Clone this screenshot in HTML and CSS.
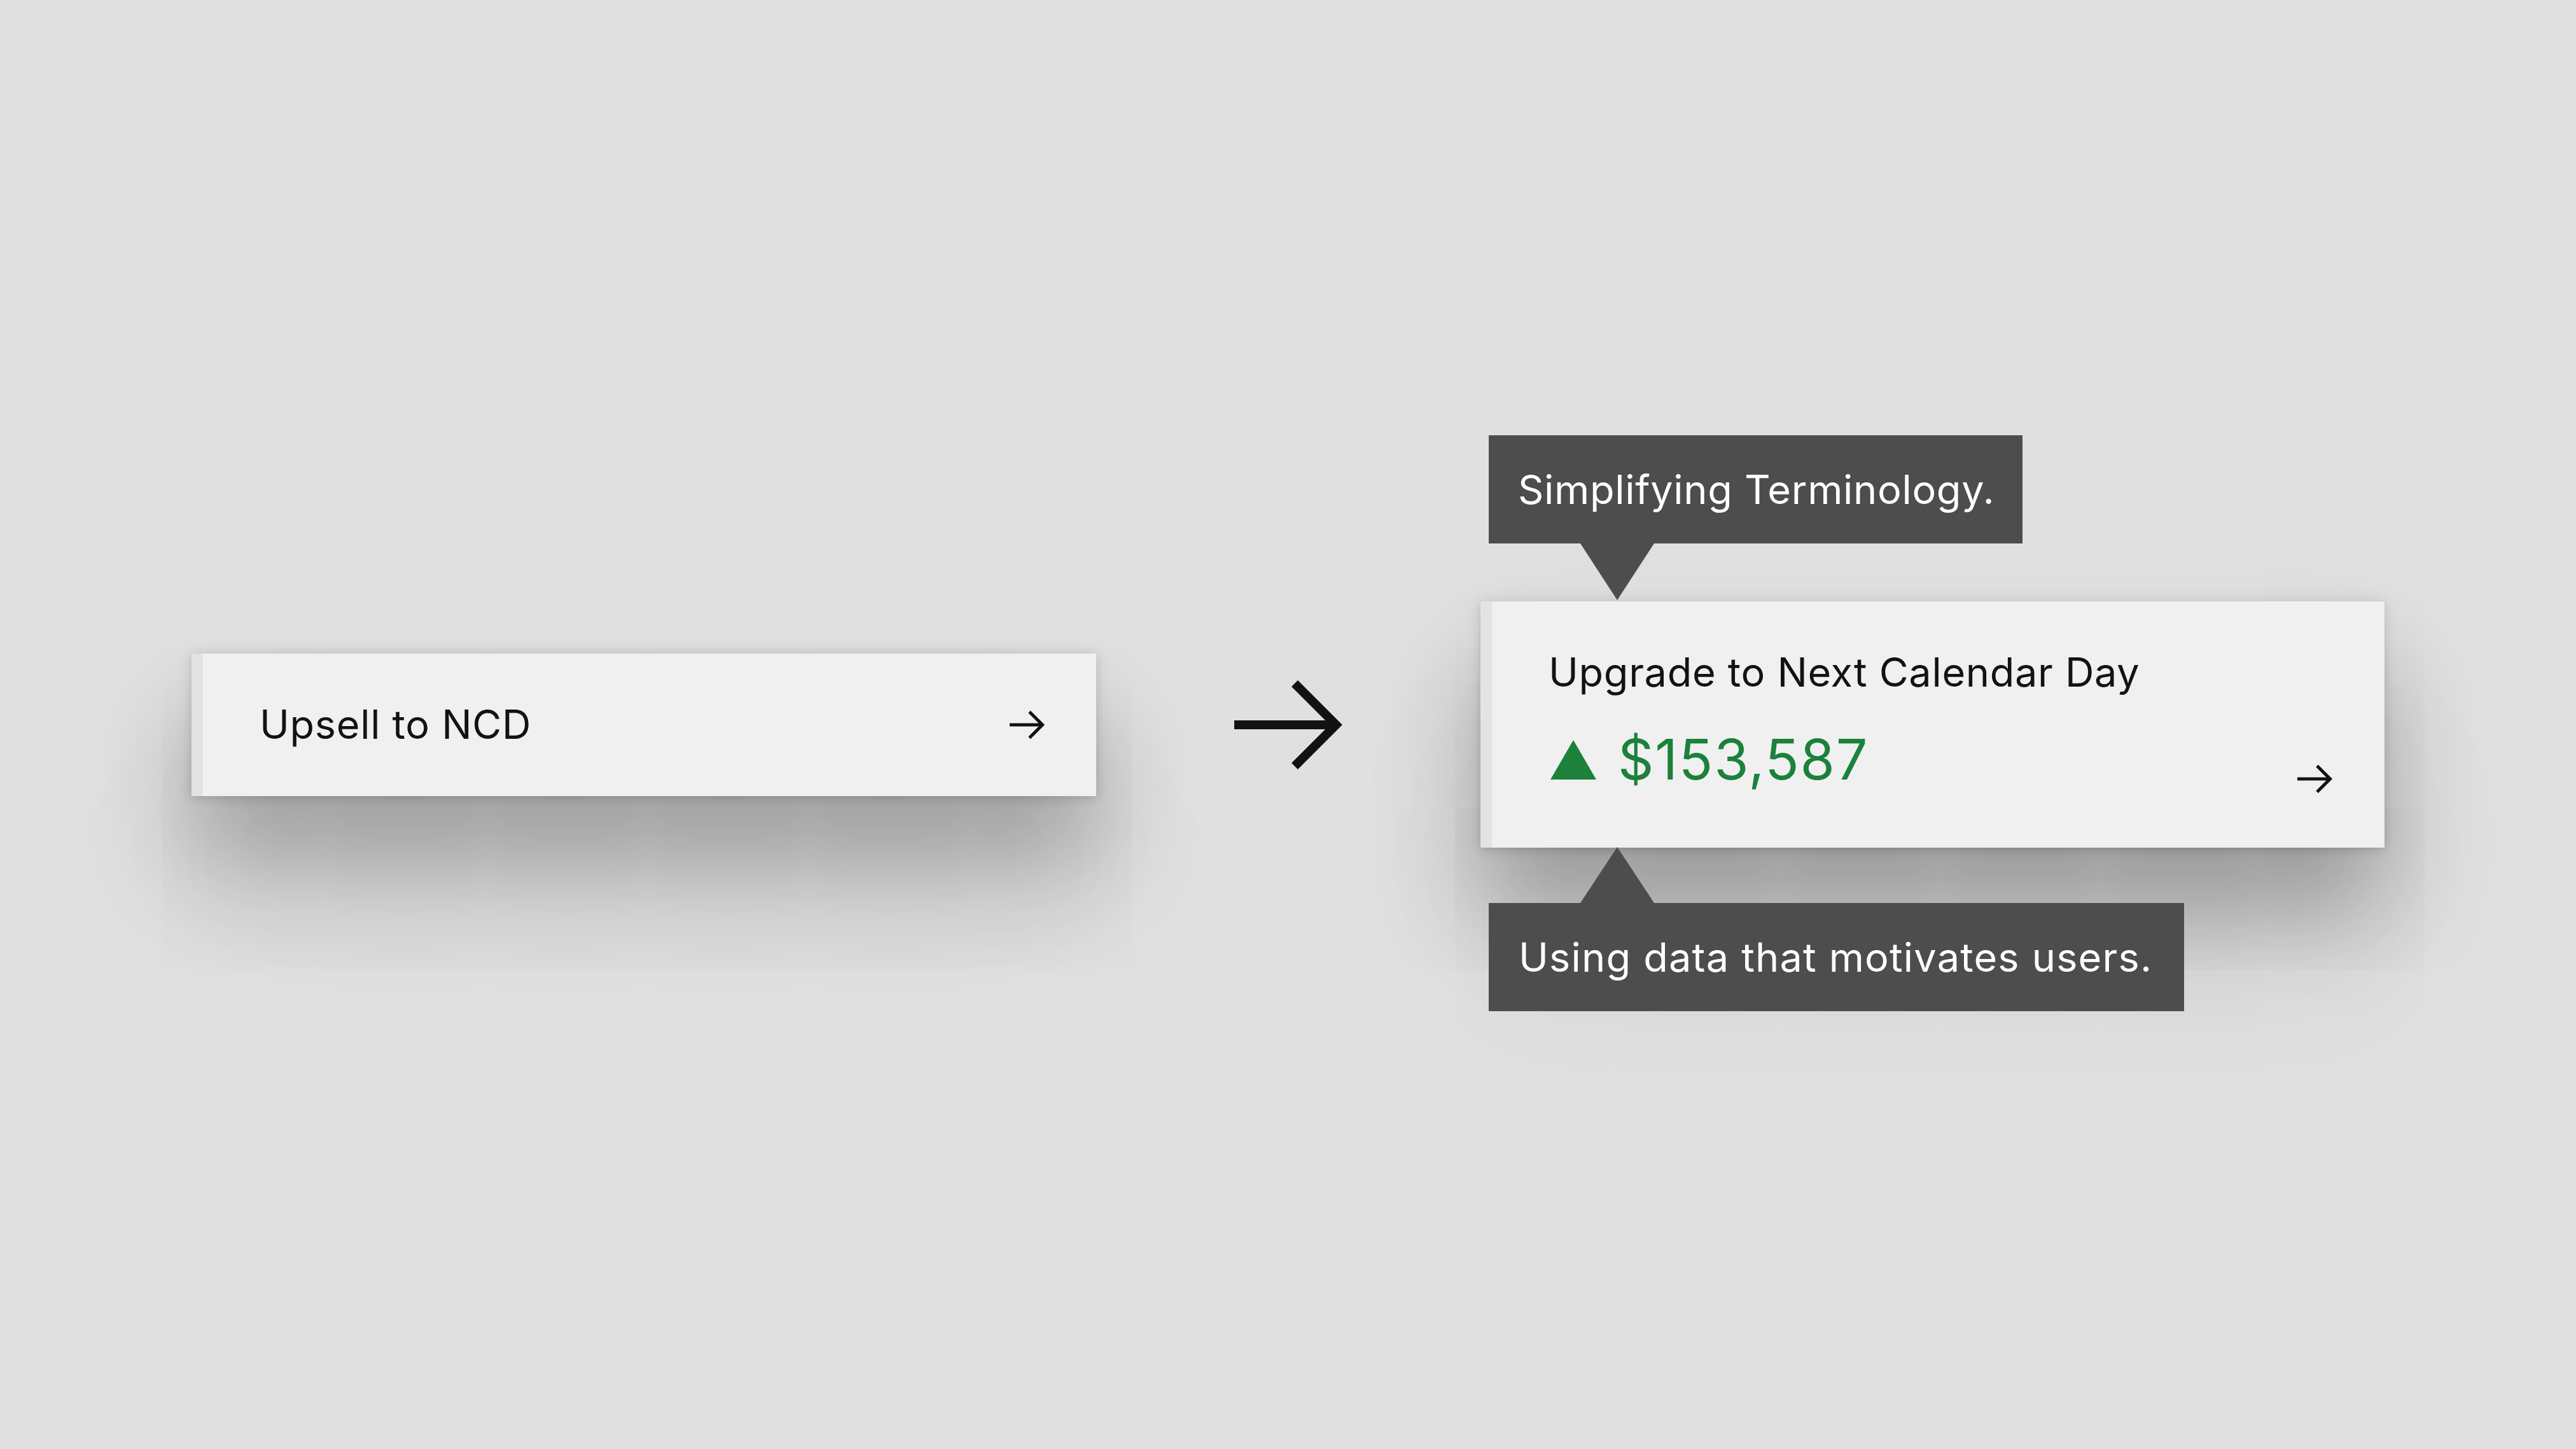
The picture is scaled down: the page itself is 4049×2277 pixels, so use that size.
FILE: index.html
```html
<!DOCTYPE html>
<html lang="en">
<head>
<meta charset="utf-8">
<title>Upsell to NCD</title>
<link rel="stylesheet" href="styles.css">
</head>
<body>
<main class="stage">
  <div class="card card-before">
    <span class="label">Upsell to NCD</span>
    <svg class="chev" viewBox="0 0 56 44" width="56" height="44"><path d="M0 22 H52 M31 1.5 L51.5 22 L31 42.5" fill="none" stroke="#121212" stroke-width="5"/></svg>
  </div>

  <svg class="big-arrow" viewBox="0 0 170 140" width="170" height="140"><path d="M0 70 H160 M95 5 L160 70 L95 135" fill="none" stroke="#121212" stroke-width="14"/></svg>

  <div class="card card-after">
    <div class="tip tip-top">Simplifying Terminology.</div>
    <div class="title">Upgrade to Next Calendar Day</div>
    <div class="price-row">
      <div class="price">
        <svg class="up" viewBox="0 0 72 62" width="72" height="62"><polygon points="36,0 72,62 0,62" fill="#1b813b"/></svg>
        <span class="amount">$153,587</span>
      </div>
      <svg class="chev chev-after" viewBox="0 0 56 44" width="56" height="44"><path d="M0 22 H52 M31 1.5 L51.5 22 L31 42.5" fill="none" stroke="#121212" stroke-width="5"/></svg>
    </div>
    <div class="tip tip-bottom">Using data that motivates users.</div>
  </div>
</main>
</body>
</html>
```

FILE: styles.css
```css
html, body {
  margin: 0;
  padding: 0;
}
body {
  width: 4049px;
  height: 2277px;
  background: #e0e0e0;
  font-family: Inter, "Noto Sans", "Liberation Sans", sans-serif;
  color: #121212;
  overflow: hidden;
}
.stage {
  width: 100%;
  height: 100%;
  display: flex;
  align-items: center;
  justify-content: center;
  gap: 217px;
}
.card {
  box-sizing: border-box;
  background: #f0f0f0;
  border-left: 18px solid #e3e3e3;
  box-shadow:
    0 0 24px rgba(0, 0, 0, 0.08),
    0 4px 12px rgba(0, 0, 0, 0.10),
    0 100px 160px rgba(0, 0, 0, 0.28),
    0 200px 300px rgba(0, 0, 0, 0.08);
}
.card-before {
  width: 1422px;
  height: 224px;
  display: flex;
  align-items: center;
  justify-content: space-between;
  padding: 0 80px 0 89px;
}
.label {
  font-size: 63px;
  line-height: 1;
  letter-spacing: 0.7px;
}
.chev {
  display: block;
  flex: none;
}
.big-arrow {
  display: block;
  flex: none;
}
.card-after {
  position: relative;
  width: 1421px;
  height: 387px;
  padding: 80px 81px 0 89px;
  display: flex;
  flex-direction: column;
}
.title {
  font-size: 63px;
  line-height: 1;
  letter-spacing: 0.7px;
}
.price-row {
  margin-top: 61px;
  display: flex;
  justify-content: space-between;
  align-items: flex-end;
}
.price {
  display: flex;
  align-items: baseline;
  color: #1b813b;
}
.up {
  display: block;
  margin-left: 3px;
  margin-right: 34px;
}
.amount {
  font-size: 88px;
  line-height: 1;
  letter-spacing: 1.8px;
}
.chev-after {
  margin-bottom: -9px;
}
.tip {
  position: absolute;
  left: -5px;
  height: 170px;
  box-sizing: border-box;
  display: flex;
  align-items: center;
  background: #4d4d4d;
  color: #ffffff;
  font-size: 63px;
  line-height: 1;
  white-space: nowrap;
}
.tip::after {
  content: "";
  position: absolute;
  left: 144px;
  width: 0;
  height: 0;
  border-left: 58px solid transparent;
  border-right: 58px solid transparent;
}
.tip-top {
  top: -261px;
  padding: 0 44px 0 46px;
  letter-spacing: 0.7px;
}
.tip-top::after {
  top: 100%;
  border-top: 89px solid #4d4d4d;
}
.tip-bottom {
  top: 474px;
  padding: 0 50px 0 47px;
  letter-spacing: 1.2px;
}
.tip-bottom::after {
  bottom: 100%;
  border-bottom: 88px solid #4d4d4d;
}
```
